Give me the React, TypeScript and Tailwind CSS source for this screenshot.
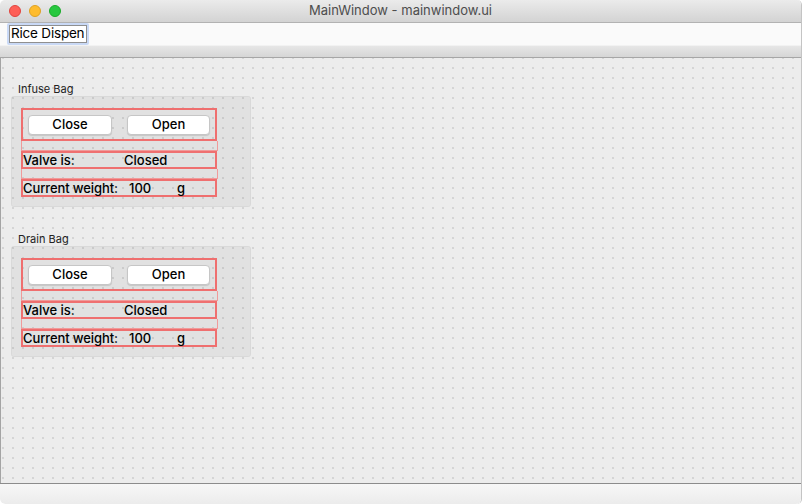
import React from "react";

const dots =
  "bg-[radial-gradient(circle,#bcbcbc_0.5px,transparent_0.9px)] bg-size-[10px_10px] bg-position-[-3px_5px]";

const Frame = ({ className, children }: { className?: string; children?: React.ReactNode }) => (
  <div className={`box-border border-[#ef6f6f] ${className ?? ""}`}>{children}</div>
);

const QtButton = ({ label, w }: { label: string; w: string }) => (
  <button
    className={`${w} h-[20px] rounded-[4px] border border-[#c6c6c6] bg-white text-[13px] leading-none font-medium text-black shadow-[0_1px_1px_rgba(0,0,0,0.12)]`}
  >
    {label}
  </button>
);

const BagGroup = ({ title }: { title: string }) => (
  <div className="flex flex-col">
    <div className="ml-[17px] h-[14px] text-[11px] leading-[14px] text-[#222]">{title}</div>
    <div className="ml-[10px] h-[111px] w-[240px] rounded-[3px] border border-black/[0.04] bg-black/[0.045] pl-[9px] pt-[11px]">
      <div className="flex w-[197px] flex-col font-medium">
        <Frame className="flex h-[33px] w-[196px] items-center gap-[15px] border-2 pl-[5px]">
          <QtButton label="Close" w="w-[84px]" />
          <QtButton label="Open" w="w-[83px]" />
        </Frame>
        <Frame className="h-[10px] w-[197px] border border-t-0 border-[#f09a9a]" />
        <Frame className="flex h-[18px] w-[196px] items-center border-2 text-[13px] leading-none">
          <span className="w-[101px]">Valve is:</span>
          <span>Closed</span>
        </Frame>
        <Frame className="h-[10px] w-[197px] border border-t-0 border-[#f09a9a]" />
        <Frame className="flex h-[18px] w-[196px] items-center border-2 text-[13px] leading-none">
          <span className="w-[106px] whitespace-nowrap tracking-[-0.1px]">Current weight:</span>
          <span className="w-[48px]">100</span>
          <span>g</span>
        </Frame>
      </div>
    </div>
  </div>
);

export default function App() {
  return (
    <div
      className="h-[504px] w-[804px] overflow-hidden bg-white text-black"
      style={{ fontFamily: 'Inter, "Liberation Sans", sans-serif' }}
    >
      <div className="flex h-[504px] w-[802px] flex-col overflow-hidden rounded-[5px] border-r border-[#c4c4c4]">
        {/* title bar */}
        <div className="relative flex h-[23px] shrink-0 items-center border-b border-[#b2b2b2] bg-gradient-to-b from-[#ebebeb] to-[#d3d3d3]">
          <div className="flex gap-[8px] pl-[9px]">
            <span className="h-[12px] w-[12px] rounded-full border border-[#e0443e] bg-[#fe5f57]" />
            <span className="h-[12px] w-[12px] rounded-full border border-[#dea123] bg-[#febc2e]" />
            <span className="h-[12px] w-[12px] rounded-full border border-[#1aab29] bg-[#28c840]" />
          </div>
          <div className="absolute inset-0 flex items-center justify-center text-[13px] text-[#4d4d4d]">
            MainWindow - mainwindow.ui
          </div>
        </div>

        {/* toolbar */}
        <div className="flex h-[22px] shrink-0 items-center bg-[#fafafa] pl-[7px]">
          <div className="flex h-[22px] w-[82px] items-center overflow-hidden rounded-[2px] border-2 border-[#c9d9f6] bg-white">
            <div className="flex h-full w-full items-center overflow-hidden whitespace-nowrap border border-[#8f8f8f] pl-[1px] text-[13.5px] tracking-[-0.2px] leading-none">
              Rice Dispen
            </div>
          </div>
        </div>
        <div className="h-[13px] shrink-0 border-t border-[#f2f2f2] border-b border-b-[#a6a6a6] bg-gradient-to-b from-[#e6e6e6] to-[#d6d6d6]" />

        {/* central widget */}
        <div className={`flex flex-1 flex-col gap-[25px] border-l border-[#a4a4a4] bg-[#ececec] pt-[24px] ${dots}`}>
          <BagGroup title="Infuse Bag" />
          <BagGroup title="Drain Bag" />
        </div>

        {/* status bar */}
        <div className="h-[21px] shrink-0 rounded-b-[5px] border-t border-[#8c8c8c] bg-gradient-to-b from-[#f7f7f7] to-[#ececec]" />
      </div>
    </div>
  );
}
